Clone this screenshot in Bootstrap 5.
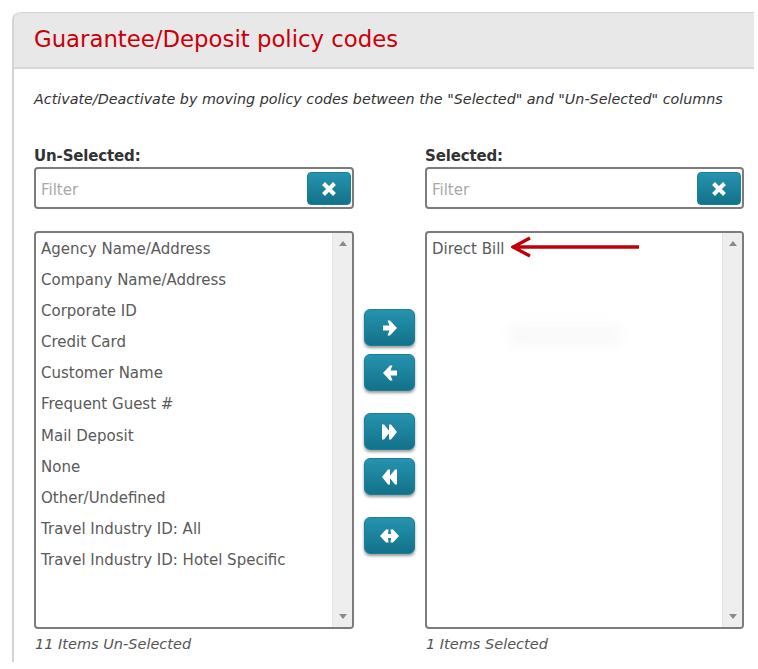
<!DOCTYPE html>
<html lang="en">
<head>
    <meta charset="UTF-8">
    <meta name="viewport" content="width=device-width, initial-scale=1.0">
    <title>Guarantee/Deposit policy codes</title>
    <link href="https://cdn.jsdelivr.net/npm/bootstrap@5.3.0/dist/css/bootstrap.min.css" rel="stylesheet">
    <script src="https://cdn.jsdelivr.net/npm/bootstrap@5.3.0/dist/js/bootstrap.bundle.min.js"></script>
    <style>
        html, body { height: 669px; overflow: hidden; }
        body { background: #fff; padding: 12px 4px 0 12px; font-family: "DejaVu Sans", sans-serif; color: #5a5a5a; font-size: 15px; }
        .policy-panel { height: 650px; border-left: 2px solid #d4d4d4; border-radius: 8px 0 0 0; background: #fff; }
        .policy-head { height: 57px; background: #e8e8e8; border-top: 1px solid #d4d4d4; border-bottom: 2px solid #d8d8d8; border-radius: 8px 0 0 0; padding-left: 20px; display: flex; align-items: center; }
        .policy-head h1 { font-size: 22.8px; color: #c8000a; margin: 0; font-weight: 400; font-family: "DejaVu Sans", sans-serif; }
        .policy-body { padding-left: 20px; }
        .policy-note { font-style: italic; color: #333; margin: 20px 0 0; height: 57px; line-height: 20px; font-size: 14.3px; white-space: nowrap; }
        .pick-col { width: 320px; }
        .pick-col-right { width: 319px; }
        .pick-label { font-weight: 700; color: #333; line-height: 20px; height: 21px; font-size: 15px; letter-spacing: -.15px; }
        .filter-box { height: 42px; border: 2px solid #7c7c7c; border-radius: 4px; padding: 3px 1px 2px 0; background: #fff; }
        .filter-box input { border: 0; border-radius: 0; box-shadow: none; padding: 3px 5px 0; font-size: 15px; height: 100%; color: #555; font-family: inherit; }
        .filter-box input::placeholder { color: #aaa; }
        .teal-btn { background: linear-gradient(#2693af, #127289); border: 1px solid #1a7f98; border-radius: 4px; color: #fff; padding: 0; display: flex; align-items: center; justify-content: center; }
        .clear-btn { width: 44px; height: 33px; flex-shrink: 0; }
        .move-btn { width: 51px; height: 37px; border-radius: 6px; box-shadow: 0 2px 3px rgba(0,0,0,.4); }
        .code-list { height: 398px; margin-top: 22px; border: 2px solid #7c7c7c; border-radius: 4px; background: #fff; overflow: hidden; }
        .code-list ul { margin: 0; padding: 1px 5px 0; flex: 1; }
        .code-list li { height: 31.1px; line-height: 31px; white-space: nowrap; }
        .fake-scroll { width: 20px; background: #eee; border-left: 1px solid #e4e4e4; padding: 8px 0; }
        .fake-scroll span { width: 0; height: 0; border-left: 4px solid transparent; border-right: 4px solid transparent; }
        .fake-scroll .up { border-bottom: 5px solid #8a8a8a; }
        .fake-scroll .down { border-top: 5px solid #8a8a8a; }
        .pick-count { font-style: italic; color: #555; line-height: 20px; margin-top: 5px; font-size: 14.5px; padding-left: 1px; }
        .move-col { width: 71px; padding: 163px 0 0 10px; }
        .move-gap-s { margin-top: 8px; }
        .move-gap-l { margin-top: 22px; }
        .red-arrow { position: absolute; left: 497px; top: 224px; }
        .smudge { position: absolute; left: 496px; top: 312px; width: 110px; height: 22px; background: #f9f9f9; filter: blur(6px); }
    </style>
</head>
<body>

<div class="policy-panel position-relative">
    <div class="policy-head"><h1>Guarantee/Deposit policy codes</h1></div>
    <div class="policy-body">
        <p class="policy-note">Activate/Deactivate by moving policy codes between the "Selected" and "Un-Selected" columns</p>
        <div class="d-flex">
            <!-- Un-Selected -->
            <div class="pick-col">
                <div class="pick-label">Un-Selected:</div>
                <div class="filter-box d-flex">
                    <input type="text" class="form-control" placeholder="Filter">
                    <button type="button" class="btn teal-btn clear-btn">
                        <svg width="18" height="18" viewBox="0 0 18 18"><path d="M3.5 3.5 L14.5 14.5 M14.5 3.5 L3.5 14.5" stroke="#fff" stroke-width="4" fill="none"/></svg>
                    </button>
                </div>
                <div class="code-list d-flex">
                    <ul class="list-unstyled">
                        <li>Agency Name/Address</li>
                        <li>Company Name/Address</li>
                        <li>Corporate ID</li>
                        <li>Credit Card</li>
                        <li>Customer Name</li>
                        <li>Frequent Guest #</li>
                        <li>Mail Deposit</li>
                        <li>None</li>
                        <li>Other/Undefined</li>
                        <li>Travel Industry ID: All</li>
                        <li>Travel Industry ID: Hotel Specific</li>
                    </ul>
                    <div class="fake-scroll d-flex flex-column justify-content-between align-items-center"><span class="up"></span><span class="down"></span></div>
                </div>
                <div class="pick-count">11 Items Un-Selected</div>
            </div>
            <!-- move buttons -->
            <div class="move-col">
                <button type="button" class="btn teal-btn move-btn">
                    <svg width="14" height="16" viewBox="0 0 14 16"><path d="M0 5.5 H6.5 L4.5 0.5 H7 L14 8 L7 15.5 H4.5 L6.5 10.5 H0 Z" fill="#fff"/></svg>
                </button>
                <button type="button" class="btn teal-btn move-btn move-gap-s">
                    <svg width="14" height="16" viewBox="0 0 14 16"><path d="M14 5.5 H7.5 L9.5 0.5 H7 L0 8 L7 15.5 H9.5 L7.5 10.5 H14 Z" fill="#fff"/></svg>
                </button>
                <button type="button" class="btn teal-btn move-btn move-gap-l">
                    <svg width="15" height="16" viewBox="0 0 15 16"><path d="M0 0.5 H2 L8 8 L2 15.5 H0 Z M7 0.5 H9 L15 8 L9 15.5 H7 Z" fill="#fff"/></svg>
                </button>
                <button type="button" class="btn teal-btn move-btn move-gap-s">
                    <svg width="15" height="16" viewBox="0 0 15 16"><path d="M15 0.5 H13 L7 8 L13 15.5 H15 Z M8 0.5 H6 L0 8 L6 15.5 H8 Z" fill="#fff"/></svg>
                </button>
                <button type="button" class="btn teal-btn move-btn move-gap-l">
                    <svg width="19" height="14" viewBox="0 0 19 14"><path d="M0 7 L6 0.5 H8.5 L8 5 H11 L10.5 0.5 H13 L19 7 L13 13.5 H10.5 L11 9 H8 L8.5 13.5 H6 Z" fill="#fff"/></svg>
                </button>
            </div>
            <!-- Selected -->
            <div class="pick-col-right">
                <div class="pick-label">Selected:</div>
                <div class="filter-box d-flex">
                    <input type="text" class="form-control" placeholder="Filter">
                    <button type="button" class="btn teal-btn clear-btn">
                        <svg width="18" height="18" viewBox="0 0 18 18"><path d="M3.5 3.5 L14.5 14.5 M14.5 3.5 L3.5 14.5" stroke="#fff" stroke-width="4" fill="none"/></svg>
                    </button>
                </div>
                <div class="code-list d-flex">
                    <ul class="list-unstyled">
                        <li>Direct Bill</li>
                    </ul>
                    <div class="fake-scroll d-flex flex-column justify-content-between align-items-center"><span class="up"></span><span class="down"></span></div>
                </div>
                <div class="pick-count">1 Items Selected</div>
            </div>
        </div>
    </div>
    <!-- annotation over the list -->
    <svg class="red-arrow" width="130" height="24" viewBox="0 0 130 24"><path d="M128 11 H1 M19 2 L2 11 L19 20" stroke="#c00008" stroke-width="3.4" fill="none"/></svg>
    <div class="smudge"></div>
</div>
</body>
</html>
